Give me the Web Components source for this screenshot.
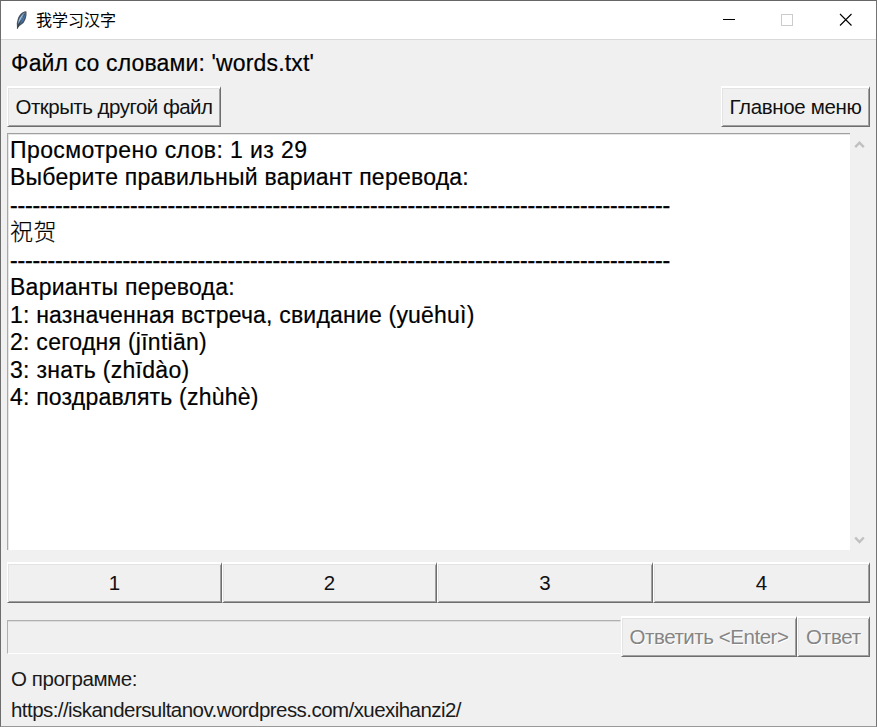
<!DOCTYPE html>
<html lang="ru">
<head>
<meta charset="utf-8">
<title>我学习汉字</title>
<style>
html, body { margin: 0; height: 100%; overflow: hidden; }
body { font-family: "Liberation Sans", Arial, "Noto Sans CJK SC", sans-serif; color: #000; background: #f0f0f0; }
</style>
</head>
<body>
<app-window></app-window>
<script>
const define = (name, html, ready) => {
  const tpl = document.createElement('template');
  tpl.innerHTML = html;
  customElements.define(name, class extends HTMLElement {
    constructor() {
      super();
      this.attachShadow({ mode: 'open' }).append(tpl.content.cloneNode(true));
    }
    connectedCallback() { if (ready) ready(this); }
  });
};

/* A single line of text; letter spacing is spread so that it is `span` pixels wide. */
define('text-line', `
<style>:host { display: block; white-space: nowrap; } span { display: inline-block; vertical-align: top; }</style>
<span><slot></slot></span>`, el => {
  const span = Number(el.getAttribute('span'));
  if (!span) return;
  const box = el.shadowRoot.querySelector('span');
  const count = [...el.textContent].length;
  const width = box.getBoundingClientRect().width;
  if (width) box.style.letterSpacing = ((span - width) / count) + 'px';
});

define('tk-button', `
<style>
:host { display: flex; box-sizing: border-box; height: 41px; align-items: center; justify-content: center;
  font-size: 20.5px; line-height: 24px; background: #f0f0f0; color: #111;
  border: 1px solid; border-color: #fff #6e6e6e #6e6e6e #fff;
  border-top-width: 2px;
  box-shadow: inset 1px 1px #e3e3e3, inset -1px -1px #a0a0a0; }
:host([disabled]) { color: #858585; text-shadow: 1px 1px #fff; }
</style><slot></slot>`);

define('title-bar', `
<style>
:host { display: flex; height: 38px; background: #fff; border-bottom: 1px solid #d9d9d9; align-items: center; padding-right: 1px; }
.feather { width: 13px; height: 20px; margin: 0 8px 1px 14px; }
.name { flex: 1; font: 16px/24px "Noto Sans CJK SC", sans-serif; padding-bottom: 3px; }
.ctl { width: 58px; height: 38px; }
.ctl:last-child { width: 59px; }
</style>
<svg class="feather" viewBox="0 0 13 20"><path d="M2 19 1.8 13 3 8Q5 3 10 1.2L11.5 1.5Q12 8 8.5 13L4.5 16Z" fill="#46525f"/><path d="M3.4 14Q2.8 8 9.8 2.2 8.4 8 3.4 14Z" fill="#9cc6ee"/><path d="M4.5 14.6Q10 11 11 2.6 8 9 4.5 14.6Z" fill="#3f78bd"/><path d="M2.2 19Q4 12 9 4" fill="none" stroke="#222c38" stroke-width=".5"/></svg>
<div class="name"><slot></slot></div>
<svg class="ctl" viewBox="0 0 58 38" shape-rendering="crispEdges"><path d="M23 18.5H35" stroke="#000"/></svg>
<svg class="ctl" viewBox="0 0 58 38" shape-rendering="crispEdges"><path d="M23.5 13.5H34.5V24.5H23.5Z" fill="none" stroke="#ccc"/></svg>
<svg class="ctl" viewBox="0 0 59 38"><path d="M24 13 35.5 24.5M35.5 13 24 24.5" stroke="#000" stroke-width="1.1"/></svg>`);

define('scroll-bar', `
<style>
:host { display: flex; flex-direction: column; justify-content: space-between; width: 20px; box-sizing: border-box; padding: 7px 0 5px 4px; }
svg { width: 11px; height: 9px; display: block; }
path { fill: none; stroke: #c0c0c0; stroke-width: 2.4; }
</style>
<svg viewBox="0 0 11 9"><path d="M1.2 7.2 5.5 2.7 9.8 7.2"/></svg>
<svg viewBox="0 0 11 9"><path d="M1.2 1.5 5.5 6 9.8 1.5"/></svg>`);

define('word-view', `
<style>
:host { display: flex; height: 417px; }
.text { flex: 1; box-sizing: border-box; background: #fff; border-top: 1px solid #a0a0a0; border-left: 1px solid #a8a8a8;
  box-shadow: inset 1px 1px #e6e6e6; font-size: 23px; line-height: 27.5px; padding: 2.6px 0 0 2px; }
</style>
<div class="text"><slot></slot></div><scroll-bar></scroll-bar>`);

define('app-window', `
<style>
:host { display: block; box-sizing: border-box; width: 877px; height: 727px; background: #f0f0f0;
  border: 1px solid; border-color: #666 #747474 #999 #6d6d6d; }
.body { padding: 0 6px; }
.file { font-size: 23px; line-height: 28px; padding: 9px 0 9px 4px; -webkit-text-stroke: .2px #000; }
.row { display: flex; justify-content: space-between; margin-bottom: 6px; }
.row tk-button:first-child { width: 214px; }
.row tk-button:last-child { width: 149px; }
word-view { -webkit-text-stroke: .2px #000; }
.options { display: grid; grid-template-columns: 215px 215px 216px 217px; margin-top: 12px; }
.answer { display: flex; margin-top: 13px; align-items: flex-start; }
.entry { flex: 1; box-sizing: border-box; height: 34px; margin-top: 4px; border: 1px solid; border-color: #b0b0b0 #f0f0f0 #fff #b0b0b0; box-shadow: inset 0 1px #dcdcdc; }
.about { font-size: 20.5px; line-height: 31px; padding: 6px 0 0 4px; color: #1a1a1a; }
.hanzi { font-family: "Noto Sans CJK SC", sans-serif; font-weight: 300; line-height: 23px; height: 27.5px; }
.rule { -webkit-text-stroke: .4px #000; }
</style>
<title-bar>我学习汉字</title-bar>
<div class="body">
  <text-line class="file" span="303">Файл со словами: 'words.txt'</text-line>
  <div class="row">
    <tk-button><text-line span="197">Открыть другой файл</text-line></tk-button>
    <tk-button><text-line span="132">Главное меню</text-line></tk-button>
  </div>
  <word-view>
    <text-line span="297.5">Просмотрено слов: 1 из 29</text-line>
    <text-line span="459">Выберите правильный вариант перевода:</text-line>
    <text-line class="rule" span="660">${'-'.repeat(88)}</text-line>
    <text-line class="hanzi" span="47">祝贺</text-line>
    <text-line class="rule" span="660">${'-'.repeat(88)}</text-line>
    <text-line span="225">Варианты перевода:</text-line>
    <text-line span="464.5">1: назначенная встреча, свидание (yuēhuì)</text-line>
    <text-line span="197">2: сегодня (jīntiān)</text-line>
    <text-line span="179.5">3: знать (zhīdào)</text-line>
    <text-line span="248.5">4: поздравлять (zhùhè)</text-line>
  </word-view>
  <div class="options"><tk-button>1</tk-button><tk-button>2</tk-button><tk-button>3</tk-button><tk-button>4</tk-button></div>
  <div class="answer">
    <div class="entry"></div>
    <tk-button disabled style="width:176px"><text-line span="159">Ответить &lt;Enter&gt;</text-line></tk-button>
    <tk-button disabled style="width:73px"><text-line span="55">Ответ</text-line></tk-button>
  </div>
  <div class="about">
    <text-line span="126">О программе:</text-line>
    <text-line span="450">https://iskandersultanov.wordpress.com/xuexihanzi2/</text-line>
  </div>
</div>`);
</script>
</body>
</html>
